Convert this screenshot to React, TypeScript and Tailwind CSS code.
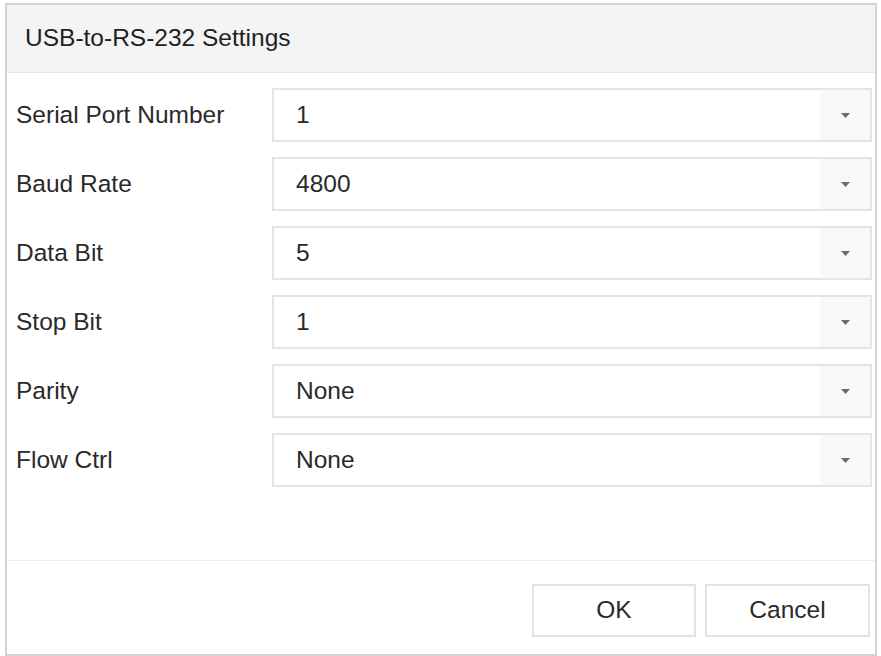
import React from 'react'

const rows = [
  { label: 'Serial Port Number', value: '1' },
  { label: 'Baud Rate', value: '4800' },
  { label: 'Data Bit', value: '5' },
  { label: 'Stop Bit', value: '1' },
  { label: 'Parity', value: 'None' },
  { label: 'Flow Ctrl', value: 'None' },
]

function Select({ value }: { value: string }) {
  return (
    <div className="flex h-[54px] w-[600px] items-stretch border-2 border-[#e4e4e4] bg-white">
      <div className="flex flex-1 items-center pl-[22px] text-[24.5px] text-[#2a2a2a]">{value}</div>
      <div className="flex w-[50px] items-center justify-center bg-[#f8f8f8]">
        <svg width="9" height="5" viewBox="0 0 9 5">
          <path d="M0 0 L9 0 L4.5 5 Z" fill="#6a6a6a" />
        </svg>
      </div>
    </div>
  )
}

export default function App() {
  return (
    <div className="h-[656px] w-[881px] bg-white pl-[5px] pt-[3px]" style={{ fontFamily: '"Liberation Sans", Arial, sans-serif' }}>
      <div className="flex h-[653px] w-[872px] flex-col border-2 border-[#d4d4d4]">
        {/* Header */}
        <div className="flex h-[68px] items-center border-b border-[#e6e6e6] bg-[#f4f4f4] pl-[18px] text-[24.5px] text-[#1f1f1f]">
          USB-to-RS-232 Settings
        </div>

        {/* Body */}
        <div className="flex flex-1 flex-col gap-[15px] pl-[9px] pr-[3px] pt-[15px]">
          {rows.map(r => (
            <div key={r.label} className="flex items-center">
              <div className="w-[256px] text-[24.5px] text-[#2a2a2a]">{r.label}</div>
              <Select value={r.value} />
            </div>
          ))}
        </div>

        {/* Footer */}
        <div className="flex justify-end gap-[9px] border-t border-[#ececec] pb-[17px] pr-[5px] pt-[23px]">
          <button className="h-[53px] w-[164px] border-2 border-[#e2e2e2] bg-white text-[24.5px] text-[#2a2a2a]">OK</button>
          <button className="h-[53px] w-[165px] border-2 border-[#e2e2e2] bg-white text-[24.5px] text-[#2a2a2a]">Cancel</button>
        </div>
      </div>
    </div>
  )
}
